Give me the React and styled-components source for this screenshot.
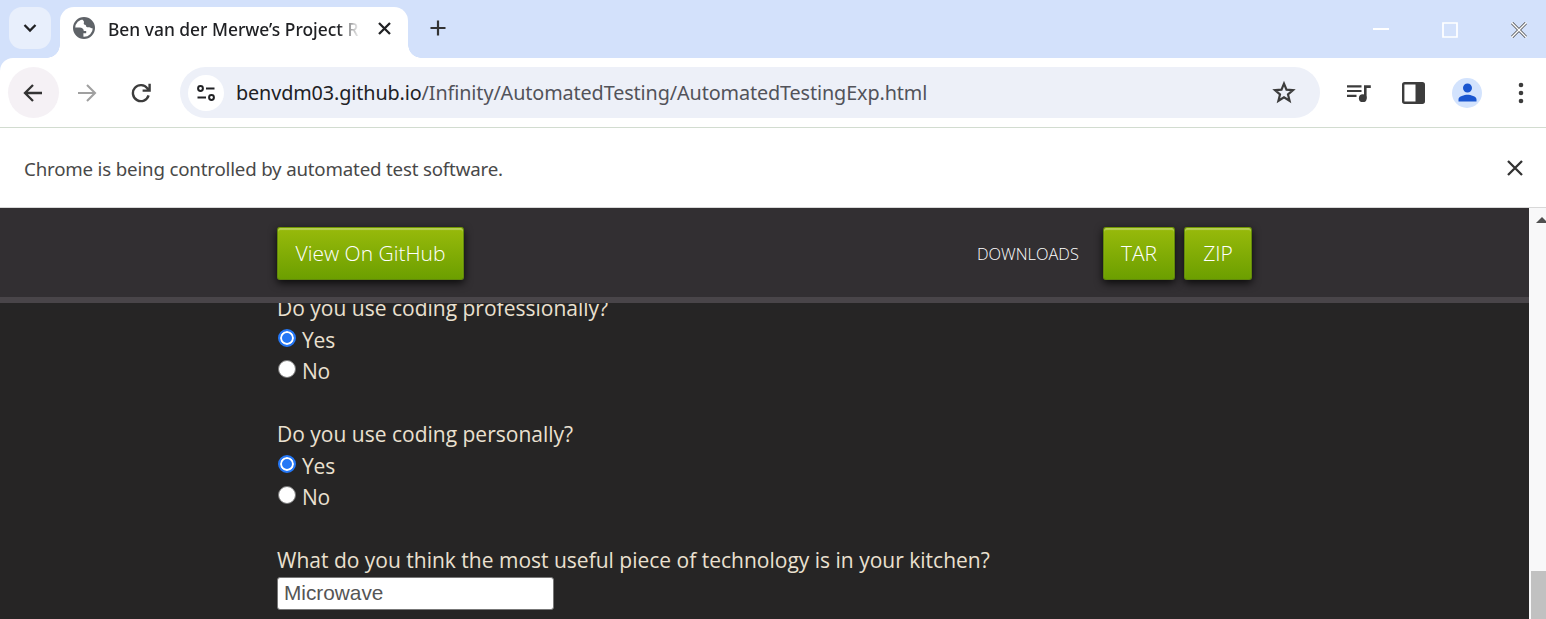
import React from 'react';
import styled, { createGlobalStyle } from 'styled-components';
import { MdPerson } from 'react-icons/md';

const Global = createGlobalStyle`
  * { box-sizing: border-box; }
  html, body { margin: 0; height: 619px; overflow: hidden; }
  body { background: #fff; }
`;
const Browser = styled.div`
  width: 1546px; height: 619px; display: flex; flex-direction: column; overflow: hidden;
  font-family: "Noto Sans", sans-serif; color: #3c3c3c; background: #fff;
`;
const TabStrip = styled.header`
  height: 58px; background: #d3e1fb; display: flex; align-items: flex-end; flex: none;
`;
const TabSearch = styled.button`
  width: 42px; height: 42px; margin: 0 9px 9px; border: 0; padding: 0; border-radius: 13px;
  background: #e8effc; display: grid; place-items: center; flex: none;
`;
const Tab = styled.div`
  position: relative; width: 348px; height: 51px; background: #fff; border-radius: 14px 14px 0 0;
  display: flex; align-items: center; padding: 0 13px 9px; flex: none;
  &::before, &::after {
    content: ""; position: absolute; bottom: 0; width: 13px; height: 13px;
  }
  &::before { left: -13px; background: radial-gradient(circle at 0 0, transparent 12.5px, #fff 13px); }
  &::after { right: -13px; background: radial-gradient(circle at 100% 0, transparent 12.5px, #fff 13px); }
`;
const TabTitle = styled.span`
  width: 252px; margin: 2px 0 0 13px; overflow: hidden; white-space: nowrap; color: #202124;
  font-size: 17.4px; line-height: 28px; font-weight: 500;
  mask-image: linear-gradient(90deg, #000 230px, transparent 252px);
`;
const TabClose = styled.span` margin-left: 18px; display: flex; `;
const NewTab = styled.span` margin: 0 0 22px 22px; display: flex; `;
const WindowButtons = styled.div`
  margin: 0 19px 20px auto; display: flex; gap: 53px; align-items: center;
`;
const ToolbarBack = styled.div` background: #d3e1fb; border-bottom: 1px solid #d2dcd0; flex: none; `;
const Toolbar = styled.div`
  height: 69px; display: flex; align-items: center; padding: 0 0 0 8px; flex: none;
  border-radius: 13px 0 0 0; background: #fff;
`;
const NavButton = styled.button`
  width: 51px; height: 51px; margin: 0 3px 0 0; padding: 0 2px 0 0; border: 0; border-radius: 50%;
  background: ${p => (p.$active ? '#f5f1f5' : 'transparent')}; display: grid; place-items: center;
`;
const Address = styled.div`
  width: 1140px; height: 51px; margin-left: 10px; border-radius: 26px; background: #edf0f8; flex: none;
  display: flex; align-items: center; padding: 0 22px 0 8px;
`;
const SiteInfo = styled.span`
  width: 36px; height: 36px; border-radius: 50%; background: #fff; display: grid; place-items: center;
`;
const Url = styled.span`
  margin-left: 12px; flex: 1; white-space: nowrap; font-size: 19.8px; line-height: 30px;
  letter-spacing: -0.11px; color: #52535a;
  b { font-weight: 400; color: #202124; }
`;
const Actions = styled.div`
  display: flex; align-items: center; gap: 24px; padding-left: 24px; color: #3c3c3c;
`;
const Action = styled.span`
  width: 30px; height: 30px; border-radius: 50%; display: grid; place-items: center;
  background: ${p => (p.$avatar ? '#d3e3fd' : 'transparent')}; color: ${p => (p.$avatar ? '#1a56d0' : '#3c3c3c')};
`;
const InfoBar = styled.div`
  height: 80px; flex: none; display: flex; align-items: center; justify-content: space-between;
  padding: 1px 23px 0 24px; font-size: 18.7px; color: #484848; letter-spacing: -0.18px;
  border-bottom: 1px solid #d8d8d8;
`;
const Viewport = styled.div` flex: 1; display: flex; min-height: 0; `;
const Page = styled.main`
  width: 1529px; height: 411px; overflow: hidden; background: #262525; color: #eae0d0;
  font-family: "Open Sans", "Noto Sans", sans-serif;
`;
const PageHeader = styled.div`
  height: 95px; background: #322f32; border-bottom: 6px solid #494549; padding: 19px 268px 0 277px;
  display: flex; align-items: flex-start;
`;
const GreenButton = styled.a`
  width: ${p => p.$w}px; height: 53px; margin-right: 9px; text-align: center;
  border: 1px solid #62890a; border-top-color: #719700; border-radius: 3px; color: #fff;
  font-weight: 300; font-size: 21px; line-height: 50px; white-space: nowrap;
  background: linear-gradient(#98ba0b, #6c9f00);
  box-shadow: inset 0 2px 1px rgba(255,255,255,.3), 0 3px 9px rgba(0,0,0,.8);
`;
const Downloads = styled.span`
  margin: 0 24px 0 auto; line-height: 54px; font-size: 16.4px; font-weight: 300; color: #fff; width: 102px;
  white-space: nowrap;
`;
const FormClip = styled.div` overflow: hidden; height: 316px; `;
const Form = styled.div`
  padding-left: 277px; font-size: 21px; line-height: 31.5px; margin-top: -10px;
`;
const Question = styled.div` margin-bottom: 31.5px; `;
const Prompt = styled.div` white-space: nowrap; `;
const Choice = styled.label` display: flex; align-items: flex-start; height: 31.5px; letter-spacing: -0.2px; `;
const Radio = styled.span`
  width: 18px; height: 18px; margin: 4px 6px 0 1px; border-radius: 50%;
  background: ${p => (p.$on ? '#2477f5' : '#fff')};
  border: ${p => (p.$on ? '2px solid #2477f5' : '1px solid #777')};
  box-shadow: ${p => (p.$on ? 'inset 0 0 0 2px #fff' : 'none')};
`;
const Field = styled.input`
  display: block; width: 277px; height: 33px; margin: 0; border: 1px solid #777; border-radius: 3px;
  padding: 0 6px; background: #fff; color: #555; font: 20.8px "Liberation Sans", Arial, sans-serif; outline: 0;
`;
const Scrollbar = styled.div`
  width: 17px; background: #f8f8f9; display: flex; flex-direction: column; align-items: flex-end; justify-content: space-between;
`;
const Thumb = styled.div` width: 15px; height: 48px; background: #c1c1c1; `;

const Line = ({ d, w, h, s = 2, c = '#333' }) => (
  <svg width={w} height={h} viewBox={`0 0 ${w} ${h}`} fill="none" stroke={c} strokeWidth={s}><path d={d} /></svg>
);
const Globe = () => (
  <svg width="22" height="22" viewBox="0 0 22 22">
    <circle cx="11" cy="11" r="9.9" fill="#fff" stroke="#5f6368" strokeWidth="2.2" />
    <path d="M9 1.5C13 .6 17 2 19.3 5.6L20.6 11.4C18.6 11.8 17.8 10.4 16.2 10.2C14.4 10.8 12.6 9.8 12.8 8C11.2 8 10.2 6.8 11 5.2C11.4 4 9.4 3.4 9 1.5Z" fill="#5f6368" />
    <path d="M1.2 10.4H6.6C9 10.4 10.8 11.8 10.8 14H13.2V16.2H10.4V20.6C5 20.6 1.2 16.4 1.2 10.4Z" fill="#5f6368" />
  </svg>
);
const Queue = () => (
  <svg width="24" height="20" viewBox="0 0 24 20" fill="#3c3c3c">
    <path d="M0 2.3H14.5V4.4H0ZM0 7H14.5V9.1H0ZM0 11.8H9.5V13.9H0Z" />
    <path d="M17 2.3H23.8V5H19.6V15.2H17Z" />
    <circle cx="15.8" cy="15.2" r="3.9" />
  </svg>
);

const questions = [
  { text: 'Do you use coding professionally?', options: true },
  { text: 'Do you use coding personally?', options: true },
  { text: 'What do you think the most useful piece of technology is in your kitchen?' },
];

export default function App() {
  return (
    <Browser>
      <Global />
      <TabStrip>
        <TabSearch><Line w={14} h={10} s={2.3} c="#202124" d="M1.5 2L7 7.5L12.5 2" /></TabSearch>
        <Tab>
          <Globe />
          <TabTitle>Ben van der Merwe’s Project Repository</TabTitle>
          <TabClose><Line w={13} h={13} s={2.3} c="#202124" d="M1 1L12 12M12 1L1 12" /></TabClose>
        </Tab>
        <NewTab><Line w={16} h={16} s={2.2} d="M8 0.5V15.5M0.5 8H15.5" /></NewTab>
        <WindowButtons>
          <Line w={16} h={16} c="#fff" d="M0 7H16" />
          <Line w={16} h={16} c="#fff" s={1.7} d="M1 1H15V15H1Z" />
          <svg width="16" height="16" fill="none">
            <path d="M1 1L15 15M15 1L1 15" stroke="#444" strokeWidth="3" />
            <path d="M.5 .5L15.5 15.5M15.5 .5L.5 15.5" stroke="#fff" strokeWidth="1.5" />
          </svg>
        </WindowButtons>
      </TabStrip>
      <ToolbarBack>
        <Toolbar>
          <NavButton $active><Line w={20} h={18} s={2.3} d="M19 9H2M10 1L2 9L10 17" /></NavButton>
          <NavButton><Line w={20} h={18} s={2.1} c="#a0a0a0" d="M1 9H18M10 1L18 9L10 17" /></NavButton>
          <NavButton><Line w={20} h={20} s={2.4} c="#3c3c3c" d="M17.6 12.4A8 8 0 1 1 16.4 5.4L18 7.6M18.6 .8V7.6H11.6" /></NavButton>
          <Address>
            <SiteInfo>
              <svg width="20" height="18" fill="none" stroke="#202124" strokeWidth="2">
                <circle cx="4.5" cy="4.5" r="2.4" /><path d="M10 4.5H18.5M1.5 13.5H10" /><circle cx="15.5" cy="13.5" r="2.4" />
              </svg>
            </SiteInfo>
            <Url><b>benvdm03.github.io</b>/Infinity/AutomatedTesting/AutomatedTestingExp.html</Url>
            <Line w={28} h={28} s={2.2} c="#3c3c3c" d="M14 4.6L16.5 10.6L23 11.1L18 15.4L19.6 21.8L14 18.4L8.4 21.8L10 15.4L5 11.1L11.5 10.6Z" />
          </Address>
          <Actions>
            <Action><Queue /></Action>
            <Action><svg width="23" height="22"><rect x="1.2" y="1.2" width="20.6" height="19.6" rx="1.5" fill="none" stroke="#3c3c3c" strokeWidth="2.4" /><path d="M13.5 1H22V21H13.5Z" fill="#3c3c3c" /></svg></Action>
            <Action $avatar><MdPerson size={27} /></Action>
            <Action><svg width="6" height="22" fill="#3c3c3c"><circle cx="3" cy="3" r="2.3" /><circle cx="3" cy="11" r="2.3" /><circle cx="3" cy="19" r="2.3" /></svg></Action>
          </Actions>
        </Toolbar>
      </ToolbarBack>
      <InfoBar>
        <span>Chrome is being controlled by automated test software.</span>
        <Line w={16} h={16} s={2.3} d="M1 1L15 15M15 1L1 15" />
      </InfoBar>
      <Viewport>
        <Page>
          <PageHeader>
            <GreenButton $w={187}>View On GitHub</GreenButton>
            <Downloads>DOWNLOADS</Downloads>
            <GreenButton $w={72}>TAR</GreenButton>
            <GreenButton $w={68}>ZIP</GreenButton>
          </PageHeader>
          <FormClip>
            <Form>
              {questions.map(q => (
                <Question key={q.text}>
                  <Prompt>{q.text}</Prompt>
                  {q.options
                    ? <><Choice><Radio $on />Yes</Choice><Choice><Radio />No</Choice></>
                    : <Field defaultValue="Microwave" />}
                </Question>
              ))}
            </Form>
          </FormClip>
        </Page>
        <Scrollbar>
          <svg width="10" height="20"><path d="M0 15L6 9L12 15Z" fill="#505050" /></svg>
          <Thumb />
        </Scrollbar>
      </Viewport>
    </Browser>
  );
}
